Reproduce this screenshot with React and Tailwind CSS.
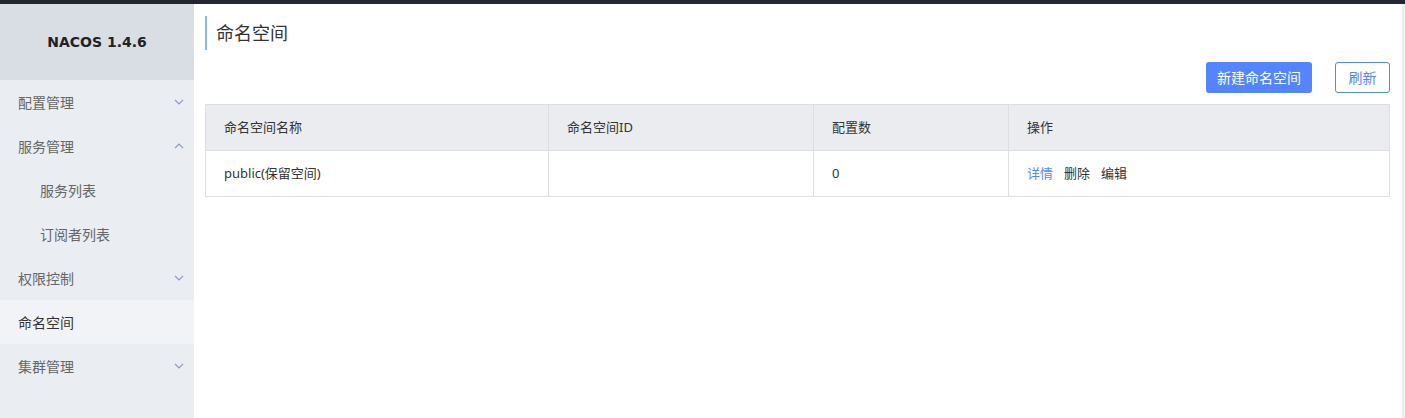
import { Fragment } from "react"

const font = { fontFamily: '"Noto Sans", "Noto Sans CJK SC", sans-serif' }

function Chevron({ up }) {
  return (
    <svg width="10" height="6" viewBox="0 0 10 6" className="text-[#8a9bbb]">
      <polyline
        points={up ? "1,5 5,1 9,5" : "1,1 5,5 9,1"}
        fill="none"
        stroke="currentColor"
        strokeWidth="1.1"
      />
    </svg>
  )
}

const menu = [
  { label: "配置管理", chevron: "down" },
  { label: "服务管理", chevron: "up" },
  { label: "服务列表", sub: true },
  { label: "订阅者列表", sub: true },
  { label: "权限控制", chevron: "down" },
  { label: "命名空间", active: true },
  { label: "集群管理", chevron: "down" },
]

export default function App() {
  return (
    <div className="w-[1405px] h-[418px] flex flex-col bg-white overflow-hidden" style={font}>
      <div className="h-[4px] bg-[#23262e] shrink-0" />
      <div className="flex flex-1 min-h-0">
        {/* Sidebar */}
        <div className="w-[194px] shrink-0 flex flex-col bg-[#eaedf1]">
          <div className="h-[76px] bg-[#d9dee4] flex items-center justify-center">
            <span
              className="text-[14px] font-bold text-[#222]"
              style={{ fontFamily: '"DejaVu Sans", sans-serif' }}
            >
              NACOS 1.4.6
            </span>
          </div>
          {menu.map((m) => (
            <div
              key={m.label}
              className={
                "h-[44px] flex items-center justify-between pr-[10px] text-[14px] " +
                (m.sub ? "pl-[40px] " : "pl-[18px] ") +
                (m.active ? "bg-[#f2f3f7] text-[#333]" : "text-[#666]")
              }
            >
              <span>{m.label}</span>
              {m.chevron && <Chevron up={m.chevron === "up"} />}
            </div>
          ))}
        </div>

        {/* Main */}
        <div className="flex-1 flex">
          <div className="flex-1 pl-[11px] pr-[12px] pt-[12px]">
            <div className="border-l-2 border-[#88b7e0] h-[34px] flex items-center pl-[9px]">
              <h1 className="text-[18px] text-[#333] leading-none">命名空间</h1>
            </div>
            <div className="flex justify-end gap-[23px] mt-[12px]">
              <button className="h-[31px] w-[106px] rounded-[3px] bg-[#5584ff] text-white text-[14px]">
                新建命名空间
              </button>
              <button className="h-[31px] w-[55px] rounded-[3px] border border-[#5584ff] text-[#5584ff] text-[14px] bg-white">
                刷新
              </button>
            </div>
            <div className="mt-[11px] border border-[#dcdee3] text-[13px] text-[#333]">
              <div className="grid grid-cols-[343px_265px_195px_1fr] h-[46px] bg-[#ebecf0] border-b border-[#dcdee3]">
                {["命名空间名称", "命名空间ID", "配置数", "操作"].map((h, i) => (
                  <div
                    key={h}
                    className={"flex items-center pl-[18px] " + (i < 3 ? "border-r border-[#dcdee3]" : "")}
                  >
                    {h}
                  </div>
                ))}
              </div>
              <div className="grid grid-cols-[343px_265px_195px_1fr] h-[45px]">
                <div className="flex items-center pl-[18px] border-r border-[#dcdee3]">public(保留空间)</div>
                <div className="border-r border-[#dcdee3]" />
                <div className="flex items-center pl-[18px] border-r border-[#dcdee3]">0</div>
                <div className="flex items-center pl-[18px] gap-[11px]">
                  <span className="text-[#5584ff]">详情</span>
                  <span>删除</span>
                  <span>编辑</span>
                </div>
              </div>
            </div>
          </div>
          <div className="w-[3px] bg-[#eeeeee]" />
        </div>
      </div>
    </div>
  )
}
